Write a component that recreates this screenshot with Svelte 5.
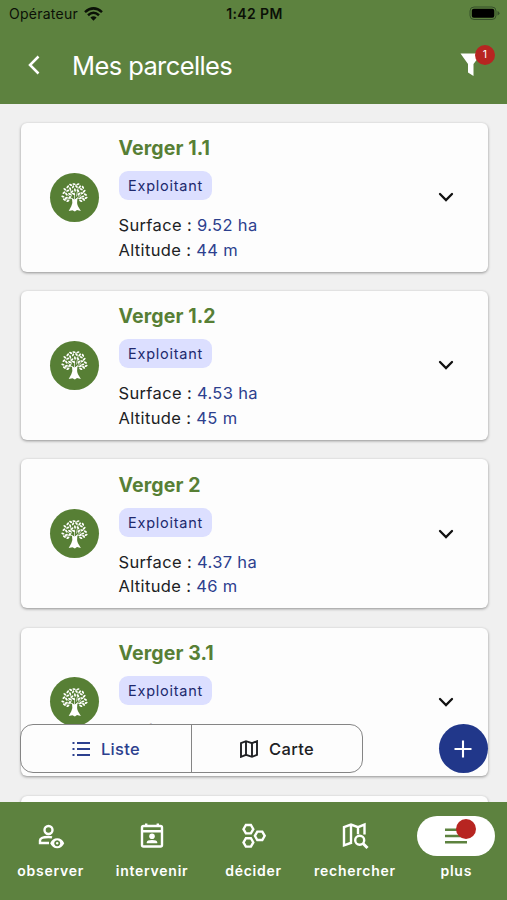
<script lang="ts">
	type Parcel = { name: string; role: string; surface: string; altitude: string };

	const parcels: Parcel[] = [
		{ name: 'Verger 1.1', role: 'Exploitant', surface: '9.52', altitude: '44' },
		{ name: 'Verger 1.2', role: 'Exploitant', surface: '4.53', altitude: '45' },
		{ name: 'Verger 2', role: 'Exploitant', surface: '4.37', altitude: '46' },
		{ name: 'Verger 3.1', role: 'Exploitant', surface: '4.22', altitude: '46' }
	];

	const tabs = ['observer', 'intervenir', 'décider', 'rechercher', 'plus'];

	// Leaves of the tree logo: x, y, rotation
	const leaves = [
		[3, 15, 20], [4, 11, -35], [6.5, 12.5, 60], [5, 7.5, 40], [8, 9, -20],
		[8, 5, -50], [10.5, 7, 70], [11, 3, 30], [13.5, 5, -60], [14.5, 2.2, 10],
		[17, 4.6, 50], [18.5, 2.3, -20], [20.5, 5, -60], [22, 7.5, 30], [23.7, 5.5, 60],
		[25, 9.5, -40], [22.5, 11.5, 10], [26.3, 13, 30], [23.5, 15, -20], [27, 16.4, -30],
		[24.5, 18, 35], [21, 16.5, -50], [6.5, 16.5, -20], [4.5, 18.2, 35], [8.2, 19.5, -30],
		[10, 12.5, 30], [12.5, 10, -45], [15.5, 8.3, 80], [18.5, 9, 45], [19.5, 12.5, -55],
		[14, 12.3, 20], [10, 16, -40], [21.5, 19.5, 20]
	];

	let view = $state('liste');
	let active = $state('plus');
</script>

<div class="app">
	<header>
		<div class="status">
			<div class="carrier">
				<span>Opérateur</span>
				<svg width="19" height="14" viewBox="0 0 19 14">
					<path d="M1 5.1Q9.5-2.4 18 5.1" />
					<path d="M4 8.2Q9.5 3.3 15 8.2" />
					<path class="dot" d="M6.4 10.6Q9.5 8 12.6 10.6L9.5 13.7Z" />
				</svg>
			</div>
			<span class="time">1:42 PM</span>
			<div class="battery">
				<svg width="31" height="15" viewBox="0 0 31 15">
					<rect class="shell" x="1" y="1" width="26" height="12.5" rx="4" />
					<rect x="2.8" y="2.8" width="22.5" height="9" rx="2" />
					<path class="cap" d="M28.5 5v4.5q2-.8 2-2.2t-2-2.3" />
				</svg>
			</div>
		</div>
		<div class="bar">
			<button class="back" aria-label="Retour">
				<svg width="14" height="20" viewBox="0 0 14 20"><path d="M11.5 1.5 3 10l8.5 8.5" /></svg>
			</button>
			<h1>Mes parcelles</h1>
			<button class="filter" aria-label="Filtrer">
				<svg width="22" height="24" viewBox="0 0 22 24">
					<path d="M.5.5h21L13.5 11v12L8 19.5V11Z" />
				</svg>
				<span class="badge">1</span>
			</button>
		</div>
	</header>

	<main>
		{#each parcels as parcel}
			<article>
				<div class="logo">
					<svg width="29" height="30" viewBox="0 0 30 31">
						<path
							class="branch"
							d="M15 22V11M15 20 9 14 6 12M15 19l7-6 3-3M12 17l-7 1M18 17l7 0M12 15l-1-7M17 15l2-10"
						/>
						{#each leaves as [x, y, angle]}
							<ellipse cx={x} cy={y} rx="1.75" ry=".95" transform="rotate({angle} {x} {y})" />
						{/each}
						<path d="M12.4 16.5 15 18.3l3.3-2.3q-1.3 6 .3 9l3 5-4-1-2.2 1.6-2.5-1.4-3.9.9 2.7-5q1.7-3.5.7-8.6" />
					</svg>
				</div>
				<div class="info">
					<h2>{parcel.name}</h2>
					<span class="chip">{parcel.role}</span>
					<p>Surface : <b>{parcel.surface} ha</b></p>
					<p>Altitude : <b>{parcel.altitude} m</b></p>
				</div>
				<svg class="chevron" width="18" height="12" viewBox="0 0 18 12">
					<path d="m3 3 6 6 6-6" />
				</svg>
			</article>
		{/each}
		<!-- next page, not loaded yet -->
		<article></article>
	</main>

	<div class="floating">
		<div class="switch">
			<button class:selected={view === 'liste'} onclick={() => (view = 'liste')}>
				<svg width="18" height="16" viewBox="0 0 18 16">
					<path d="M5 2h13M5 8h13M5 14h13M.5 2h2M.5 8h2M.5 14h2" />
				</svg>
				Liste
			</button>
			<button class:selected={view === 'carte'} onclick={() => (view = 'carte')}>
				<svg width="18" height="18" viewBox="0 0 18 18">
					<path d="m1 3.2 5-2 6 2 5-2v13.6l-5 2-6-2-5 2ZM6 1.2v13.6M12 3.2v13.6" />
				</svg>
				Carte
			</button>
		</div>
		<button class="add" aria-label="Ajouter">
			<svg width="18" height="18" viewBox="0 0 18 18"><path d="M9 .5v17M.5 9h17" /></svg>
		</button>
	</div>

	<nav>
		{#each tabs as tab}
			<button class="tab" class:active={active === tab} onclick={() => (active = tab)}>
				<span class="pill">
					{#if tab === 'observer'}
						<svg width="28" height="28" viewBox="0 0 28 28">
							<circle cx="11.5" cy="8" r="4" />
							<path d="M12 21H3v-2.5q0-3.5 8.5-3.5 2 0 3.5.4" />
							<path
								class="solid"
								fill-rule="evenodd"
								d="M13.2 21.2q2.3-5 7-5t7 5q-2.3 5-7 5t-7-5m7-3a3 3 0 1 0 .01 0m0 1.7a1.3 1.3 0 1 1-.01 0"
							/>
						</svg>
					{:else if tab === 'intervenir'}
						<svg width="28" height="28" viewBox="0 0 28 28">
							<rect x="4" y="4" width="20" height="20.5" rx="1.5" />
							<path d="M4 9.2h20M8.2 1.5v3M19.8 1.5v3" />
							<circle class="solid" cx="14" cy="14.2" r="2.8" />
							<path class="solid" d="M8.8 21.2v-1q0-2.2 5.2-2.2t5.2 2.2v1Z" />
						</svg>
					{:else if tab === 'décider'}
						<svg width="28" height="28" viewBox="0 0 28 28">
							<path d="M6.9 3h5l2.4 4.2-2.4 4.2h-5L4.5 7.2Z" />
							<path d="M6.9 16.2h5l2.4 4.2-2.4 4.2h-5l-2.4-4.2Z" />
							<path d="M18.3 9.6h5l2.4 4.2-2.4 4.2h-5l-2.4-4.2Z" />
						</svg>
					{:else if tab === 'rechercher'}
						<svg width="28" height="28" viewBox="0 0 28 28">
							<path d="M11 20.5 3 23.3V5.2l7-2.6 7 2.6 6.5-2.6v10M10 2.6v17.8M17 5.2v7" />
							<circle cx="18.7" cy="18.3" r="4.5" />
							<path class="thick" d="m22 21.5 4.5 4.5" />
						</svg>
					{:else}
						<svg width="24" height="18" viewBox="0 0 24 18">
							<path d="M1 2.7h22M1 9h22M1 15.3h22" />
						</svg>
						<i class="alert"></i>
					{/if}
				</span>
				{tab}
			</button>
		{/each}
	</nav>
</div>

<style>
	:global(body) {
		margin: 0;
	}

	.app {
		position: relative;
		display: flex;
		flex-direction: column;
		width: 507px;
		height: 900px;
		overflow: hidden;
		background: #f0f0f0;
		font-family: Inter, 'Liberation Sans', sans-serif;
		color: #202124;
	}

	button {
		padding: 0;
		border: 0;
		background: none;
		font: inherit;
		color: inherit;
	}

	svg {
		display: block;
		flex: none;
	}

	header {
		flex: none;
		height: 103.5px;
		background: #5d823f;
	}

	.status {
		display: grid;
		grid-template-columns: 1fr auto 1fr;
		align-items: center;
		height: 27px;
		padding: 0 7px 0 9px;
		color: #0b1007;
		font-size: 14px;
	}

	.carrier {
		display: flex;
		align-items: center;
		gap: 6px;
		letter-spacing: 0.25px;
	}

	.carrier path {
		fill: none;
		stroke: #0b1007;
		stroke-width: 2.5;
	}

	.carrier .dot {
		fill: #0b1007;
		stroke: none;
	}

	.time {
		font-weight: 600;
		letter-spacing: 0.4px;
	}

	.battery {
		justify-self: end;
	}

	.battery .shell {
		fill: none;
		stroke: #36502a;
	}

	.battery .cap {
		fill: #36502a;
	}

	.bar {
		display: flex;
		align-items: center;
		height: 76px;
		padding: 0 14px 0 27px;
		color: #fff;
	}

	.back path {
		fill: none;
		stroke: #fff;
		stroke-width: 2.5;
	}

	h1 {
		flex: 1;
		margin: 0 0 0 31px;
		font-size: 25.5px;
		font-weight: 400;
		letter-spacing: -0.6px;
	}

	.filter {
		position: relative;
		width: 33px;
	}

	.filter path {
		fill: #fff;
	}

	.badge {
		position: absolute;
		top: -8px;
		right: -2px;
		width: 20px;
		height: 20px;
		border-radius: 50%;
		background: #b72521;
		font-size: 10.5px;
		line-height: 20px;
		text-align: center;
	}

	main {
		display: flex;
		flex: 1;
		flex-direction: column;
		gap: 19.7px;
		min-height: 0;
		padding: 19.5px 19.5px 0 20.5px;
		overflow: hidden;
	}

	article {
		display: flex;
		flex: none;
		align-items: center;
		box-sizing: border-box;
		height: 148.5px;
		padding: 0 33px 0 29px;
		border-radius: 6px;
		background: #fdfdfd;
		box-shadow: 0 1px 3px rgba(0, 0, 0, 0.4);
	}

	.logo {
		display: grid;
		place-items: center;
		width: 49px;
		height: 49px;
		border-radius: 50%;
		background: #577f35;
	}

	.logo path,
	.logo ellipse {
		fill: #fff;
	}

	.logo .branch {
		fill: none;
		stroke: #fff;
		stroke-width: 0.7;
	}

	.info {
		display: flex;
		flex: 1;
		flex-direction: column;
		align-items: flex-start;
		margin-left: 20px;
		padding-top: 4px;
	}

	h2 {
		margin: 0 0 10px;
		color: #577f35;
		font-size: 19.5px;
		font-weight: 700;
		letter-spacing: 0.1px;
		line-height: 25px;
	}

	.chip {
		margin-bottom: 13px;
		padding: 0 9px 0 9.5px;
		border-radius: 9px;
		background: #dcdfff;
		color: #20296d;
		font-size: 14.5px;
		letter-spacing: 0.75px;
		line-height: 29px;
	}

	p {
		margin: 0;
		font-size: 16.5px;
		letter-spacing: 0.35px;
		line-height: 24.5px;
	}

	b {
		color: #2c408e;
		font-weight: 400;
	}

	.chevron path {
		fill: none;
		stroke: #111;
		stroke-width: 2.3;
		stroke-linecap: round;
	}

	/* View switch and add button, over the list */
	.floating {
		position: absolute;
		right: 19.5px;
		bottom: 127px;
		left: 20px;
		display: flex;
		justify-content: space-between;
	}

	.switch {
		display: flex;
		box-sizing: border-box;
		width: 343px;
		height: 49px;
		border: 1.3px solid #858585;
		border-radius: 13px;
		background: #fdfdfd;
	}

	.switch button {
		display: flex;
		flex: 1;
		align-items: center;
		justify-content: center;
		gap: 11px;
		font-size: 16.5px;
		font-weight: 500;
		letter-spacing: 0.3px;
	}

	.switch button + button {
		border-left: 1.3px solid #858585;
	}

	.switch path {
		fill: none;
		stroke: #202124;
		stroke-width: 1.9;
	}

	.switch .selected {
		color: #2c408e;
	}

	.switch .selected path {
		stroke: #2c408e;
	}

	.add {
		display: grid;
		place-items: center;
		width: 49px;
		height: 49px;
		border-radius: 50%;
		background: #21378a;
	}

	.add path {
		stroke: #fff;
		stroke-width: 2.1;
	}

	nav {
		display: grid;
		flex: none;
		grid-template-columns: repeat(5, 1fr);
		height: 98px;
		background: #5d823f;
	}

	.tab {
		display: flex;
		flex-direction: column;
		align-items: center;
		gap: 5px;
		padding-top: 14px;
		color: #fff;
		font-size: 14px;
		font-weight: 600;
		letter-spacing: 0.75px;
		line-height: 19px;
	}

	.pill {
		position: relative;
		display: grid;
		place-items: center;
		width: 78px;
		height: 40px;
		border-radius: 20px;
	}

	.pill path,
	.pill rect,
	.pill circle {
		fill: none;
		stroke: #fff;
		stroke-width: 2.4;
	}

	.pill .solid {
		fill: #fff;
		stroke: none;
	}

	.pill .thick {
		stroke-width: 3;
	}

	.active .pill {
		background: #fff;
	}

	.active .pill path {
		stroke: #5d823f;
	}

	.alert {
		position: absolute;
		top: 3px;
		left: 39px;
		width: 20px;
		height: 20px;
		border-radius: 50%;
		background: #b72521;
	}
</style>
